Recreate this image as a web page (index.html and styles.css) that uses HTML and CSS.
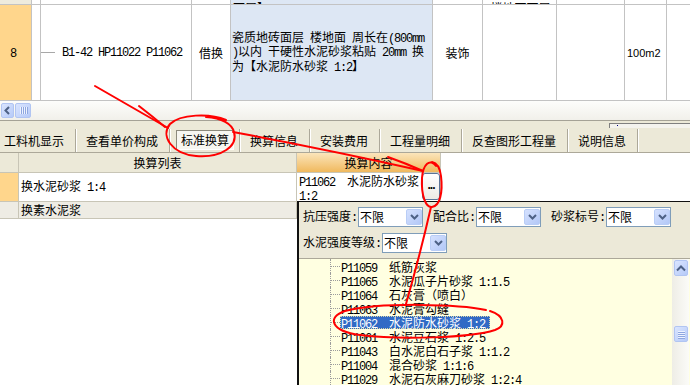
FILE: index.html
```html
<!DOCTYPE html>
<html>
<head>
<meta charset="utf-8">
<title>标准换算</title>
<link rel="stylesheet" href="styles.css">
</head>
<body>
<div class="app">
  <div class="tgrid">
    <div class="trow top">
      <div class="c c0 beige"></div>
      <div class="c c1"></div>
      <div class="c c2"></div>
      <div class="c c3"></div>
      <div class="c c4 blue"><span class="peek">面层】</span></div>
      <div class="c c5"></div>
      <div class="c c6 center"><span class="peek">楼地面面层</span></div>
      <div class="c c7"></div>
      <div class="c c8"></div>
      <div class="c c9"></div>
    </div>
    <div class="trow main">
      <div class="c c0 orange center"><span class="num">8</span></div>
      <div class="c c1"></div>
      <div class="c c2"><i class="tline"></i><span class="a">B1-42 HP11022 P11062</span></div>
      <div class="c c3 center">借换</div>
      <div class="c c4 blue">
        <div class="desc">
          <div>瓷质地砖面层<span class="a"> </span>楼地面<span class="a"> </span>周长在<span class="a">(800mm</span></div>
          <div><span class="a">)</span>以内<span class="a"> </span>干硬性水泥砂浆粘贴<span class="a"> 20mm </span>换</div>
          <div>为【水泥防水砂浆<span class="a"> 1:2</span>】</div>
        </div>
      </div>
      <div class="c c5 center">装饰</div>
      <div class="c c6"></div>
      <div class="c c7"></div>
      <div class="c c8"><span class="unit">100m2</span></div>
      <div class="c c9"></div>
    </div>
  </div>

  <div class="hscroll">
    <div class="sbtn"><svg width="9" height="9" viewBox="0 0 9 9"><polyline points="6,1 2.5,4.5 6,8" fill="none" stroke="#4d6185" stroke-width="2"/></svg></div>
    <div class="sbtn hthumb"><i></i><i></i><i></i><i></i></div>
  </div>

  <div class="tabbar">
    <div class="tstrip"><div class="mini"><i></i></div></div>
    <div class="tabs">
      <div class="tab first">工料机显示</div>
      <div class="tab">查看单价构成</div>
      <div class="tab sel"><span class="selbox">标准换算</span></div>
      <div class="tab">换算信息</div>
      <div class="tab">安装费用</div>
      <div class="tab">工程量明细</div>
      <div class="tab">反查图形工程量</div>
      <div class="tab">说明信息</div>
    </div>
  </div>

  <div class="ltable">
    <div class="lrow lh">
      <div class="lc l0"></div>
      <div class="lc l1">换算列表</div>
      <div class="lc l2">换算内容</div>
    </div>
    <div class="lrow lr1">
      <div class="lc l0"></div>
      <div class="lc l1"><span>换水泥砂浆<span class="a"> 1:4</span></span></div>
      <div class="lc l2">
        <div class="ctext">
          <div><span class="a">P11062  </span>水泥防水砂浆</div>
          <div><span class="a">1:2</span></div>
        </div>
        <div class="dots">...</div>
      </div>
    </div>
    <div class="lrow lr2">
      <div class="lc l0"></div>
      <div class="lc l1">换素水泥浆</div>
      <div class="lc l2"></div>
    </div>
  </div>

  <div class="dd">
    <div class="filters">
      <div class="frow">
        <span class="flab">抗压强度<span class="a">:</span></span>
        <div class="fsel"><span>不限</span><i class="farr"><svg width="9" height="6" viewBox="0 0 9 6"><polyline points="1,1 4.5,4.5 8,1" fill="none" stroke="#4d6185" stroke-width="2"/></svg></i></div>
        <span class="flab gap">配合比<span class="a">:</span></span>
        <div class="fsel"><span>不限</span><i class="farr"><svg width="9" height="6" viewBox="0 0 9 6"><polyline points="1,1 4.5,4.5 8,1" fill="none" stroke="#4d6185" stroke-width="2"/></svg></i></div>
        <span class="flab gap">砂浆标号<span class="a">:</span></span>
        <div class="fsel"><span>不限</span><i class="farr"><svg width="9" height="6" viewBox="0 0 9 6"><polyline points="1,1 4.5,4.5 8,1" fill="none" stroke="#4d6185" stroke-width="2"/></svg></i></div>
      </div>
      <div class="frow">
        <span class="flab">水泥强度等级<span class="a">:</span></span>
        <div class="fsel"><span>不限</span><i class="farr"><svg width="9" height="6" viewBox="0 0 9 6"><polyline points="1,1 4.5,4.5 8,1" fill="none" stroke="#4d6185" stroke-width="2"/></svg></i></div>
      </div>
    </div>
    <div class="list">
      <div class="items">
        <div class="item"><span class="lbl"><span class="a code">P11059</span>纸筋灰浆</span></div>
        <div class="item"><span class="lbl"><span class="a code">P11065</span>水泥瓜子片砂浆<span class="a"> 1:1.5</span></span></div>
        <div class="item"><span class="lbl"><span class="a code">P11064</span>石灰膏（喷白）</span></div>
        <div class="item"><span class="lbl"><span class="a code">P11063</span>水泥膏勾缝</span></div>
        <div class="item on"><span class="lbl"><span class="a code">P11062</span>水泥防水砂浆<span class="a"> 1:2</span></span></div>
        <div class="item"><span class="lbl"><span class="a code">P11061</span>水泥豆石浆<span class="a"> 1:2.5</span></span></div>
        <div class="item"><span class="lbl"><span class="a code">P11043</span>白水泥白石子浆<span class="a"> 1:1.2</span></span></div>
        <div class="item"><span class="lbl"><span class="a code">P11004</span>混合砂浆<span class="a"> 1:1:6</span></span></div>
        <div class="item"><span class="lbl"><span class="a code">P11029</span>水泥石灰麻刀砂浆<span class="a"> 1:2:4</span></span></div>
      </div>
      <div class="vsb">
        <div class="sbtn up"><svg width="10" height="7" viewBox="0 0 10 7"><polyline points="1,5.5 5,1.5 9,5.5" fill="none" stroke="#4d6185" stroke-width="2"/></svg></div>
        <div class="sbtn vthumb"><i></i><i></i><i></i><i></i></div>
      </div>
    </div>
  </div>

  <svg class="marks" width="690" height="385" viewBox="0 0 690 385">
    <g fill="none" stroke="#ff0000" stroke-width="2" stroke-linecap="round">
      <path d="M95 86 Q130 106 168 128"/>
      <path d="M139 106 Q152 116 165 127"/>
      <path d="M226 120 C210 113 180 114 170 124 C160 136 172 154 196 156 C222 158 238 146 234 132 C232 124 222 118 206 117"/>
      <path d="M233 132 Q330 150 423 171"/>
      <path d="M388 157 Q405 163 423 171"/>
      <path d="M436 166 C430 158 423 164 422 178 C421 196 426 208 432 207 C440 206 443 192 441 176 C440 168 437 163 432 162"/>
      <path d="M431 207 Q420 255 406 304"/>
      <path d="M486 310 C460 304 380 302 345 311 C327 317 330 331 360 335 C400 340 470 338 495 330 C506 326 505 316 490 311"/>
    </g>
  </svg>
</div>
</body>
</html>
```

FILE: styles.css
```css
* { box-sizing: border-box; margin: 0; padding: 0; }
html, body { width: 690px; height: 385px; overflow: hidden; background: #fff; }
body {
  font-family: "Noto Sans CJK SC", "Noto Sans", sans-serif;
  font-size: 12px;
  line-height: 14px;
  color: #000;
}
.a {
  font-family: "Liberation Mono", "DejaVu Sans Mono", monospace;
  letter-spacing: -1.2px;
  white-space: pre;
}
.app { position: relative; width: 690px; height: 385px; overflow: hidden; }

/* top grid */
.trow { display: flex; border-bottom: 1px solid #c3c3c3; }
.trow.top { height: 5px; }
.trow.main { height: 96px; }
.c {
  flex: none;
  border-right: 1px solid #c3c3c3;
  display: flex;
  align-items: center;
  overflow: hidden;
  white-space: nowrap;
}
.center { justify-content: center; }
.c0 { width: 32px; }
.c1 { width: 9px; }
.c2 { width: 151px; }
.c3 { width: 39px; }
.c4 { width: 202px; }
.c5 { width: 50px; }
.c6 { width: 74px; }
.c7 { width: 68px; }
.c8 { width: 42px; }
.c9 { flex: 1; border-right: none; }
.beige { background: #eeebdd; }
.orange { background: #ffd68c; }
.blue { background: #dde7f4; }
.peek { align-self: flex-end; line-height: 12px; margin-bottom: -10px; padding-left: 2px; }
.num { font-family: "Liberation Sans", sans-serif; font-size: 12px; padding-right: 4px; }
.tline { display: block; width: 14px; height: 1px; background: #a8a8a8; margin-right: 7px; }
.desc { padding-left: 1px; line-height: 12.5px; }
.unit { font-family: "Liberation Sans", sans-serif; font-size: 11px; padding-left: 2px; }

/* horizontal scrollbar */
.hscroll {
  height: 20px;
  border-bottom: 1px solid #a5a296;
  background: linear-gradient(#fdfdfb, #f1f0ea);
  display: flex;
  align-items: center;
  padding-left: 1px;
  gap: 1px;
}
.sbtn {
  flex: none;
  width: 13px;
  height: 15px;
  border: 1px solid #b1c5f2;
  border-radius: 2px;
  background: linear-gradient(135deg, #dae5ff, #b6caf8);
  display: flex;
  align-items: center;
  justify-content: center;
}
.hthumb { width: 16px; gap: 1px; }
.hthumb i { display: block; width: 1px; height: 7px; background: #eef3ff; box-shadow: 1px 0 0 #8ea7e0; }

/* tab bar */
.tabbar { height: 32px; background: #ece9d8; border-bottom: 1px solid #aca899; }
.tstrip { height: 7px; display: flex; justify-content: flex-end; }
.mini {
  width: 81px; height: 5px; margin-top: 2px;
  border-top: 1px solid #808080; border-left: 1px solid #808080;
  background: #f4f3ee;
}
.mini i { display: block; width: 1px; height: 1px; background: #000080; margin: 1px 0 0 7px; }
.tabs { display: flex; height: 24px; align-items: center; }
.tab {
  flex: none;
  height: 23px;
  line-height: 23px;
  padding: 0 11px 0 10px;
  border-right: 1px solid #aca899;
  box-shadow: 1px 0 0 #fff;
  white-space: nowrap;
}
.tab.first { padding-left: 4px; }
.tab.sel { padding: 0 5px 0 6px; display: flex; align-items: center; }
.selbox {
  display: block;
  height: 20px;
  line-height: 18px;
  padding: 0 4px;
  border: 1px solid;
  border-color: #8d8a7d #fff #fff #8d8a7d;
  background: #f7f6f1;
}

/* lower table */
.lrow { display: flex; }
.lc {
  flex: none;
  border-right: 1px solid #c8c5b6;
  border-bottom: 1px solid #c8c5b6;
  display: flex;
  align-items: center;
  white-space: nowrap;
  overflow: hidden;
}
.l0 { width: 19px; }
.l1 { width: 278px; padding-left: 2px; }
.l2 { width: 144px; }
.lh .lc { height: 20px; }
.lh .l0, .lh .l1 { background: #ece9d8; }
.lh .l1 { justify-content: center; padding-left: 0; }
.lh .l2 { background: linear-gradient(#fbe5bb, #f0b95e); justify-content: center; }
.lr1 .lc { height: 29px; }
.lr1 .l0 { background: #ffd68c; }
.lr1 .l2 { align-items: flex-start; }
.ctext { padding: 2px 0 0 2px; line-height: 12px; }
.dots {
  margin-left: auto;
  width: 18px;
  height: 27px;
  border: 1px solid #5a7497;
  border-radius: 3px;
  background: linear-gradient(#ffffff, #ecebe5);
  font-family: "Liberation Sans", sans-serif;
  font-weight: bold;
  font-size: 12px;
  line-height: 22px;
  text-align: center;
  letter-spacing: -1px;
}
.lr2 .lc { height: 17px; background: #eeece4; }

/* dropdown panel */
.dd {
  position: absolute;
  left: 297px;
  top: 201px;
  width: 393px;
  height: 184px;
  border-left: 2px solid #111;
  border-top: 1px solid #111;
  background: #ece9d8;
  display: flex;
  flex-direction: column;
}
.filters { height: 56px; padding: 5px 0 0 4px; display: flex; flex-direction: column; gap: 6px; }
.frow { display: flex; align-items: center; height: 20px; }
.flab { margin-right: 1px; white-space: nowrap; }
.flab.gap { margin-left: 10px; }
.fsel {
  width: 65px;
  height: 20px;
  border: 1px solid #7f9db9;
  background: #fff;
  display: flex;
  align-items: center;
  padding-left: 1px;
}
.farr {
  margin-left: auto;
  width: 16px;
  height: 16px;
  border: 1px solid #b9cdf6;
  border-radius: 2px;
  background: linear-gradient(135deg, #d5e1fe, #b3c8f7);
  display: flex;
  align-items: center;
  justify-content: center;
}
.list {
  flex: 1;
  border-top: 1px solid #aca899;
  background: #ffffe1;
  display: flex;
  overflow: hidden;
}
.items { flex: 1; }
.item {
  height: 14px;
  margin-left: 31px;
  border-left: 1px dotted #9c9c9c;
  display: flex;
  align-items: center;
  white-space: nowrap;
}
.item::before {
  content: "";
  width: 9px;
  border-top: 1px dotted #9c9c9c;
  flex: none;
}
.lbl { height: 13px; line-height: 13px; padding: 0 5px 0 1px; display: block; }
.code { margin-right: 12px; }
.item.on .lbl { background: #316ac5; color: #fff; outline: 1px dotted #d9d6a8; outline-offset: -1px; }
.vsb {
  width: 17px;
  margin-right: 1px;
  padding: 1px 1px 0 2px;
  background: linear-gradient(90deg, #eeede6, #fbfbf8);
  display: flex;
  flex-direction: column;
}
.vsb .sbtn { width: 14px; height: 16px; }
.vthumb { margin-top: 50px; flex-direction: column; gap: 1px; }
.vthumb i { display: block; width: 7px; height: 1px; background: #eef3ff; box-shadow: 0 1px 0 #8ea7e0; }

/* red annotation overlay */
.marks { position: absolute; left: 0; top: 0; pointer-events: none; }
```
